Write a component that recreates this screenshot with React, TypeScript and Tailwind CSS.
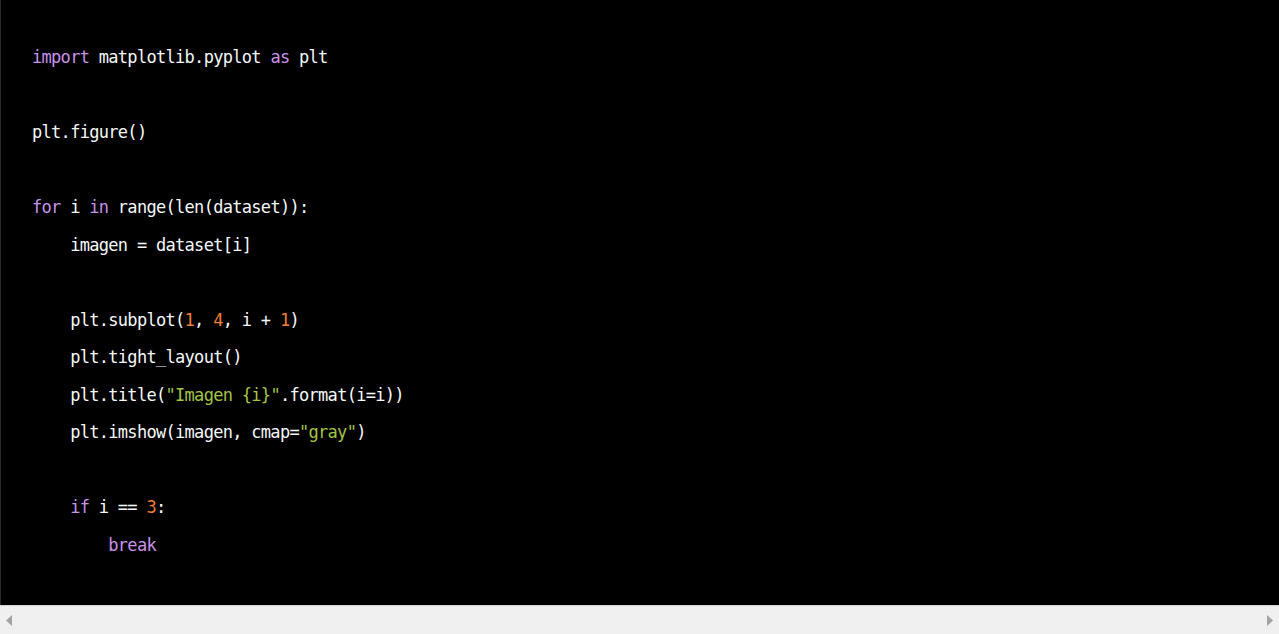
import React from "react";

const K = ({ children }: { children: React.ReactNode }) => (
  <span className="text-[#c792ea]">{children}</span>
);
const N = ({ children }: { children: React.ReactNode }) => (
  <span className="text-[#f07d32]">{children}</span>
);
const S = ({ children }: { children: React.ReactNode }) => (
  <span className="text-[#a3c444]">{children}</span>
);

const lines: React.ReactNode[] = [
  <>
    <K>import</K> matplotlib.pyplot <K>as</K> plt
  </>,
  "",
  <>plt.figure()</>,
  "",
  <>
    <K>for</K> i <K>in</K> range(len(dataset)):
  </>,
  <>{"    "}imagen = dataset[i]</>,
  "",
  <>
    {"    "}plt.subplot(<N>1</N>, <N>4</N>, i + <N>1</N>)
  </>,
  <>{"    "}plt.tight_layout()</>,
  <>
    {"    "}plt.title(<S>"Imagen {"{i}"}"</S>.format(i=i))
  </>,
  <>
    {"    "}plt.imshow(imagen, cmap=<S>"gray"</S>)
  </>,
  "",
  <>
    {"    "}
    <K>if</K> i == <N>3</N>:
  </>,
  <>
    {"        "}
    <K>break</K>
  </>,
];

export default function App() {
  return (
    <div className="w-full h-[634px] flex flex-col bg-black overflow-hidden">
      <div className="flex-1 bg-black border-l border-[#2a2a2a] pl-[31px] pt-[39px]">
        <pre
          className="text-[17px] tracking-[-0.7px] leading-[37.5px] text-[#f4f8f8] m-0"
          style={{ fontFamily: '"DejaVu Sans Mono", "Liberation Mono", monospace' }}
        >
          {lines.map((l, i) => (
            <div key={i} className="h-[37.5px] whitespace-pre">
              {l === "" ? " " : l}
            </div>
          ))}
        </pre>
      </div>
      <div className="h-[29px] shrink-0 bg-[#f0f0f0] border-t border-[#d4d4d4] flex items-center justify-between px-[6px]">
        <svg width="6" height="11" viewBox="0 0 6 11">
          <polygon points="6,0 0,5.5 6,11" fill="#a3a3a3" />
        </svg>
        <svg width="6" height="11" viewBox="0 0 6 11">
          <polygon points="0,0 6,5.5 0,11" fill="#a3a3a3" />
        </svg>
      </div>
    </div>
  );
}
